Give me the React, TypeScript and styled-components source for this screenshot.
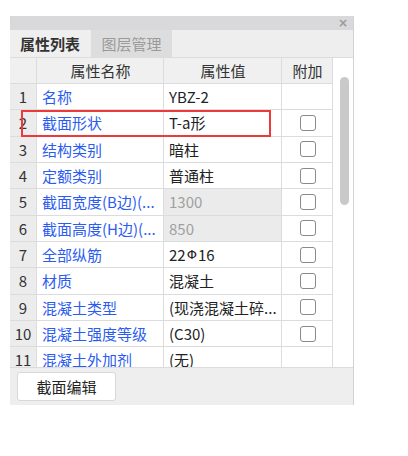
import React from "react";
import styled, { createGlobalStyle } from "styled-components";

const GlobalStyle = createGlobalStyle`
  html, body {
    margin: 0;
    padding: 0;
    background: #ffffff;
    font-family: "Noto Sans CJK SC", "Noto Sans", sans-serif;
  }
`;

const Page = styled.div`
  padding: 16px 0 0 10px;
`;

const Panel = styled.div`
  width: 344px;
  height: 389px;
  display: flex;
  flex-direction: column;
  border-right: 1px solid #d2d2d2;
  box-sizing: border-box;
  background: #eeeeee;
`;

const TitleBar = styled.div`
  height: 14px;
  background: #d9d9dc;
  display: flex;
  justify-content: flex-end;
  align-items: center;
  padding-right: 5px;
`;

const Close = styled.span`
  color: #9a9a9a;
  font-family: "DejaVu Sans", sans-serif;
  font-size: 12px;
  line-height: 14px;
  font-weight: bold;
`;

const TabBar = styled.div`
  height: 28px;
  display: flex;
  gap: 1px;
  background: #eeeeee;
  border-bottom: 1px solid #dcdcdc;
  box-sizing: border-box;
`;

const Tab = styled.div<{ $active?: boolean; $w: number }>`
  width: ${(p) => p.$w}px;
  display: flex;
  align-items: center;
  justify-content: center;
  font-size: 15px;
  font-weight: ${(p) => (p.$active ? 700 : 400)};
  color: ${(p) => (p.$active ? "#333333" : "#9a9a9a")};
  background: ${(p) => (p.$active ? "#efefef" : "#dddddd")};
`;

const GridArea = styled.div`
  height: 309px;
  display: flex;
  overflow: hidden;
  background: #ffffff;
`;

const Table = styled.div`
  width: 323px;
  display: flex;
  flex-direction: column;
`;

const Row = styled.div<{ $h?: number }>`
  position: relative;
  flex: none;
  height: ${(p) => p.$h ?? 26.33}px;
  display: grid;
  grid-template-columns: 27px 127px 118px 51px;
`;

const Cell = styled.div<{ $bg?: string; $align?: string; $color?: string }>`
  box-sizing: border-box;
  border-right: 1px solid #dcdcdc;
  border-bottom: 1px solid #dcdcdc;
  background: ${(p) => p.$bg ?? "#ffffff"};
  color: ${(p) => p.$color ?? "#222222"};
  display: flex;
  align-items: center;
  justify-content: ${(p) => p.$align ?? "flex-start"};
  padding: 0 4px 0 5px;
  font-size: 15px;
  white-space: nowrap;
  overflow: hidden;
`;

const HeadCell = styled(Cell)`
  background: #f0f0f0;
  color: #333333;
  justify-content: center;
`;

const NumCell = styled(Cell)`
  background: #ececec;
  color: #333333;
  justify-content: center;
  padding: 0;
  font-size: 15px;
`;

const Check = styled.span`
  width: 16px;
  height: 16px;
  box-sizing: border-box;
  border: 1.5px solid #8a8a8a;
  border-radius: 3px;
  background: #ffffff;
`;

const Highlight = styled.div`
  position: absolute;
  left: 11px;
  top: 0;
  width: 250px;
  height: 27px;
  box-sizing: border-box;
  border: 2px solid #ea3a3c;
  pointer-events: none;
`;

const ScrollCol = styled.div`
  width: 20px;
  position: relative;
  background: #ffffff;
`;

const Thumb = styled.div`
  position: absolute;
  left: 7px;
  top: 19px;
  width: 9px;
  height: 128px;
  border-radius: 5px;
  background: #c9c9c9;
`;

const Bottom = styled.div`
  flex: 1;
  border-top: 1px solid #dcdcdc;
  padding: 4px 0 0 7px;
`;

const EditButton = styled.button`
  width: 99px;
  height: 29px;
  background: #ffffff;
  border: 1px solid #d8d8d8;
  border-radius: 3px;
  font-family: "Noto Sans CJK SC", sans-serif;
  font-size: 15px;
  color: #222222;
  padding: 0;
`;

const Rebar = styled.span`
  font-family: "DejaVu Sans", sans-serif;
  font-size: 13px;
  margin: 0 1px;
`;

type Item = {
  name: string;
  value: React.ReactNode;
  readonly?: boolean;
  check?: boolean;
};

const items: Item[] = [
  { name: "名称", value: "YBZ-2", check: false },
  { name: "截面形状", value: "T-a形", check: true },
  { name: "结构类别", value: "暗柱", check: true },
  { name: "定额类别", value: "普通柱", check: true },
  { name: "截面宽度(B边)(...", value: "1300", readonly: true, check: true },
  { name: "截面高度(H边)(...", value: "850", readonly: true, check: true },
  {
    name: "全部纵筋",
    value: (
      <>
        22<Rebar>Φ</Rebar>16
      </>
    ),
    check: true,
  },
  { name: "材质", value: "混凝土", check: true },
  { name: "混凝土类型", value: "(现浇混凝土碎...", check: true },
  { name: "混凝土强度等级", value: "(C30)", check: true },
  { name: "混凝土外加剂", value: "(无)", check: false },
];

export default function App() {
  return (
    <Page>
      <GlobalStyle />
      <Panel>
        <TitleBar>
          <Close>×</Close>
        </TitleBar>
        <TabBar>
          <Tab $active $w={80}>属性列表</Tab>
          <Tab $w={81}>图层管理</Tab>
        </TabBar>
        <GridArea>
          <Table>
            <Row $h={26}>
              <HeadCell />
              <HeadCell>属性名称</HeadCell>
              <HeadCell>属性值</HeadCell>
              <HeadCell>附加</HeadCell>
            </Row>
            {items.map((it, i) => (
              <Row key={i}>
                <NumCell>{i + 1}</NumCell>
                <Cell $color="#2b5cf0">{it.name}</Cell>
                <Cell
                  $bg={it.readonly ? "#ebebeb" : undefined}
                  $color={it.readonly ? "#a0a0a0" : undefined}
                >
                  {it.value}
                </Cell>
                <Cell $align="center">{it.check && <Check />}</Cell>
                {i === 1 && <Highlight />}
              </Row>
            ))}
          </Table>
          <ScrollCol>
            <Thumb />
          </ScrollCol>
        </GridArea>
        <Bottom>
          <EditButton>截面编辑</EditButton>
        </Bottom>
      </Panel>
    </Page>
  );
}
